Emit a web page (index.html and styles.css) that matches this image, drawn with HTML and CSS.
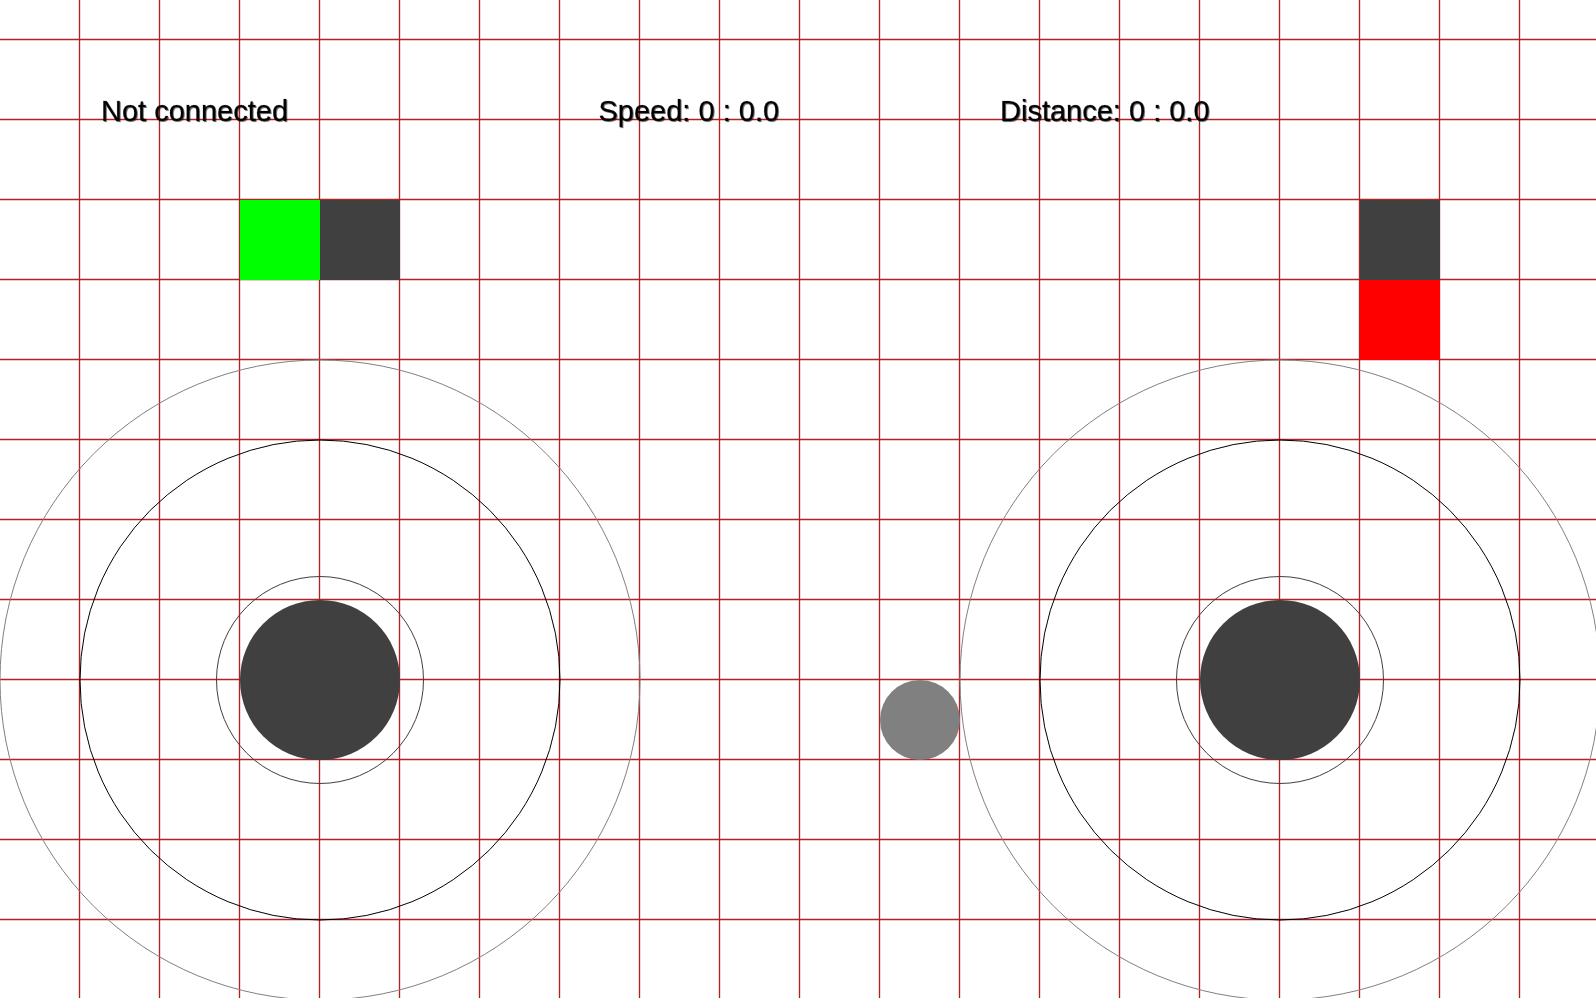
FILE: index.html
```html
<!DOCTYPE html>
<html>
<head>
<meta charset="utf-8">
<title>Controller</title>
<link rel="stylesheet" href="styles.css">
</head>
<body>
<div class="stage">
<svg class="canvas" width="1596" height="998" viewBox="0 0 1596 998" xmlns="http://www.w3.org/2000/svg">
  <g class="grid">
    <line x1="79.5" y1="0" x2="79.5" y2="998"/>
    <line x1="159.5" y1="0" x2="159.5" y2="998"/>
    <line x1="239.5" y1="0" x2="239.5" y2="998"/>
    <line x1="319.5" y1="0" x2="319.5" y2="998"/>
    <line x1="399.5" y1="0" x2="399.5" y2="998"/>
    <line x1="479.5" y1="0" x2="479.5" y2="998"/>
    <line x1="559.5" y1="0" x2="559.5" y2="998"/>
    <line x1="639.5" y1="0" x2="639.5" y2="998"/>
    <line x1="719.5" y1="0" x2="719.5" y2="998"/>
    <line x1="799.5" y1="0" x2="799.5" y2="998"/>
    <line x1="879.5" y1="0" x2="879.5" y2="998"/>
    <line x1="959.5" y1="0" x2="959.5" y2="998"/>
    <line x1="1039.5" y1="0" x2="1039.5" y2="998"/>
    <line x1="1119.5" y1="0" x2="1119.5" y2="998"/>
    <line x1="1199.5" y1="0" x2="1199.5" y2="998"/>
    <line x1="1279.5" y1="0" x2="1279.5" y2="998"/>
    <line x1="1359.5" y1="0" x2="1359.5" y2="998"/>
    <line x1="1439.5" y1="0" x2="1439.5" y2="998"/>
    <line x1="1519.5" y1="0" x2="1519.5" y2="998"/>
    <line x1="0" y1="39.5" x2="1596" y2="39.5"/>
    <line x1="0" y1="119.5" x2="1596" y2="119.5"/>
    <line x1="0" y1="199.5" x2="1596" y2="199.5"/>
    <line x1="0" y1="279.5" x2="1596" y2="279.5"/>
    <line x1="0" y1="359.5" x2="1596" y2="359.5"/>
    <line x1="0" y1="439.5" x2="1596" y2="439.5"/>
    <line x1="0" y1="519.5" x2="1596" y2="519.5"/>
    <line x1="0" y1="599.5" x2="1596" y2="599.5"/>
    <line x1="0" y1="679.5" x2="1596" y2="679.5"/>
    <line x1="0" y1="759.5" x2="1596" y2="759.5"/>
    <line x1="0" y1="839.5" x2="1596" y2="839.5"/>
    <line x1="0" y1="919.5" x2="1596" y2="919.5"/>
  </g>

  <text class="label" x="101" y="121">Not connected</text>
  <text class="label" x="598.5" y="121">Speed: 0 : 0.0</text>
  <text class="label" x="1000" y="121">Distance: 0 : 0.0</text>

  <rect class="sq-green" x="240" y="200" width="80" height="80"/>
  <rect class="sq-dark" x="320" y="200" width="80" height="80"/>
  <rect class="sq-dark" x="1360" y="200" width="80" height="80"/>
  <rect class="sq-red" x="1360" y="280" width="80" height="80"/>

  <g class="stick">
    <circle class="ring-outer" cx="320" cy="680" r="320"/>
    <circle class="ring-mid" cx="320" cy="680" r="240"/>
    <circle class="ring-inner" cx="320" cy="680" r="103.5"/>
    <circle class="knob" cx="320" cy="680" r="80"/>
  </g>
  <g class="stick">
    <circle class="ring-outer" cx="1280" cy="680" r="320"/>
    <circle class="ring-mid" cx="1280" cy="680" r="240"/>
    <circle class="ring-inner" cx="1280" cy="680" r="103.5"/>
    <circle class="knob" cx="1280" cy="680" r="80"/>
  </g>

  <circle class="dot" cx="920" cy="720" r="40"/>
</svg>
</div>
</body>
</html>
```

FILE: styles.css
```css
html, body {
  margin: 0;
  padding: 0;
  background: #ffffff;
  overflow: hidden;
}

.stage {
  position: relative;
  width: 1596px;
  height: 998px;
  overflow: hidden;
}

.canvas {
  display: block;
}

.grid line {
  stroke: #b22222;
  stroke-width: 1.35;
}

.label {
  font-family: "Liberation Sans", Arial, sans-serif;
  font-size: 29px;
  fill: #000000;
  stroke: rgba(0, 0, 0, 0.35);
  stroke-width: 0.6px;
  filter: drop-shadow(1px 1px 0.6px rgba(0, 0, 0, 0.55));
}

.sq-green { fill: #00ff00; }
.sq-dark { fill: #404040; }
.sq-red { fill: #ff0000; }

.ring-outer {
  fill: none;
  stroke: #808080;
  stroke-width: 1;
}

.ring-mid {
  fill: none;
  stroke: #000000;
  stroke-width: 1;
}

.ring-inner {
  fill: none;
  stroke: #404040;
  stroke-width: 1;
}

.knob { fill: #404040; }

.dot { fill: #808080; }
```
